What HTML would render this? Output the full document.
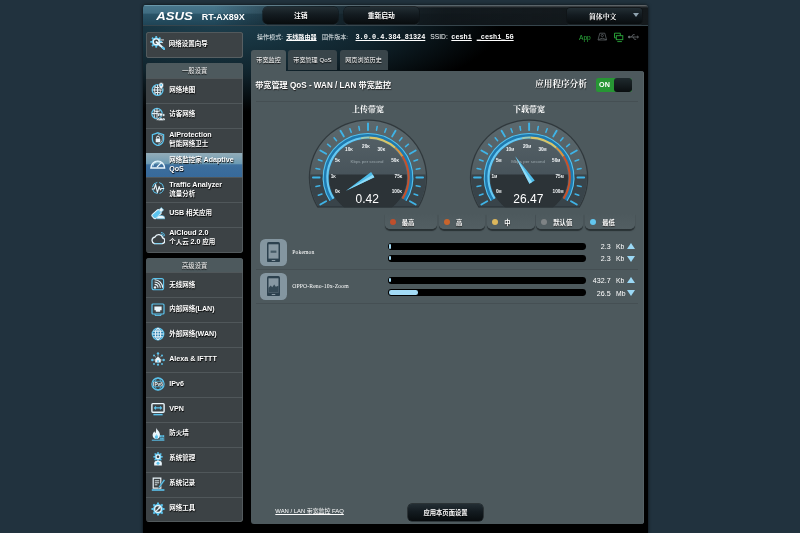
<!DOCTYPE html><html lang="zh-CN"><head><meta charset="utf-8"><title>ASUS Wireless Router RT-AX89X - 带宽监控</title><style>
html,body{margin:0;padding:0}
body{width:800px;height:533px;overflow:hidden;position:relative;will-change:transform;background:#21323d;font-family:'Liberation Sans','Noto Sans CJK SC',sans-serif;color:#fff}
.abs{position:absolute}
#bgL{left:0;top:0;width:144px;height:533px;background:#21323e}
#bgR{left:647px;top:0;width:153px;height:533px;background:#21323e}
#wrap{left:143px;top:4.5px;width:504.8px;height:529px;background:#000;border-radius:3px 3px 0 0;box-shadow:0 0 3.5px rgba(0,0,0,.75)}
#banner{left:143px;top:4.7px;width:504.8px;height:21.6px;border-radius:3px 3px 0 0;
 background:linear-gradient(90deg,rgba(12,16,19,0) 0,rgba(12,16,19,0) 14%,rgba(12,16,19,.35) 24%,rgba(12,16,19,.7) 40%,rgba(14,18,21,.92) 60%,#14191c 100%),linear-gradient(180deg,#4a788d 0,#3f6c81 40%,#2a5468 47%,#1f4456 100%);border-bottom:1px solid #36454c;box-sizing:border-box;overflow:hidden}
#banner:before{content:"";position:absolute;left:0;top:0;width:100%;height:1.4px;background:linear-gradient(90deg,#6a9aad,#55666e 45%,#5d6265)}
#banner:after{content:"";position:absolute;left:45%;top:1.4px;width:55%;height:2px;background:linear-gradient(180deg,rgba(85,90,93,.75),rgba(85,90,93,0))}
.tbtn{top:7px;height:17.2px;border-radius:4.5px;background:linear-gradient(180deg,#232e34 0,#131b20 45%,#080c0e 100%);box-shadow:0 0 0 .5px #0a0e10,0 1px 1px rgba(120,140,150,.25);
 font-weight:bold;font-size:6.8px;line-height:17.2px;text-align:center;color:#fff;text-shadow:0 .5px 0 #000}
.info{top:31.8px;font-size:6.1px;line-height:9px;white-space:nowrap;color:#e8eef0}
.info b{font-weight:bold;color:#fff;text-decoration:underline}
.info .m{font-family:'Liberation Mono','Noto Sans CJK SC',monospace;font-weight:bold;font-size:6.85px;color:#fff;text-decoration:underline}
.sbox{left:146.4px;width:96.5px;background:#3c4245;border-radius:3px;overflow:hidden}
.sbox:after{content:"";position:absolute;left:0;top:0;right:0;bottom:0;border-radius:3px;box-shadow:inset -.8px -.8px 0 #596164;pointer-events:none}
.shead{height:15px;background:#4d595d;text-align:center;font-size:6.3px;line-height:15px;color:#fff;text-shadow:0 .5px 1px #000}
.item{position:relative;height:24.77px;box-sizing:border-box;border-top:.800px solid #50575a;font-weight:bold;font-size:6.5px;color:#fff;text-shadow:.5px .5px 1px #000}
.item .t{position:absolute;left:22.8px;top:-1.7px;height:100%;display:flex;align-items:center;line-height:7.7px;white-space:nowrap}
.item .en{font-size:7.15px}
.item.sel{background:linear-gradient(180deg,#90abb8 0,#7fa3b5 22%,#6c9bb3 42%,#3f719f 47%,#3b6d9c 60%,#386a9a 100%);border-top-color:#90abb8;box-shadow:0 .7px 0 #386a9a}
.tab{top:49.8px;height:21px;border-radius:3px 3px 0 0;font-size:6.1px;line-height:20px;text-align:center;color:#fff;white-space:nowrap;text-shadow:0 .5px 1px #000}
#content{left:251.3px;top:70.7px;width:392.4px;height:453.5px;background:#4d595d;border-radius:0 3px 3px 3px;box-shadow:inset -.8px 0 0 #59656a}
.hr{height:1px;background:#566266;border-top:.6px solid #454f53;box-sizing:border-box}
.leg{top:214px;height:14.6px;border-radius:0 0 5px 5px;background:linear-gradient(180deg,rgba(77,89,93,0) 0,#505c60 50%,#525e62 100%);box-shadow:0 1.4px 1px #293134;font-size:6.3px;font-weight:bold;line-height:17.6px;color:#fff;text-shadow:0 .5px 1px #222}
.leg i{position:absolute;left:5px;top:5.2px;width:6.2px;height:6.2px;border-radius:50%}
.leg span{position:absolute;left:17px;top:0}
.bar{left:387.5px;width:198.5px;height:6.8px;border-radius:3.4px;background:#000}
.bar i{position:absolute;left:1.3px;top:1.2px;height:4.4px;border-radius:2.2px;background:#a3dbf6}
.val{font-size:7.1px;line-height:8px;color:#fff;white-space:nowrap}
.tri{width:0;height:0;border-left:4.2px solid transparent;border-right:4.2px solid transparent}
.dev{left:260.2px;width:27.3px;height:27.3px;border-radius:5.5px;background:#8496a0}
.dname{left:292.2px;font-family:'Liberation Serif','Noto Serif CJK SC',serif;font-size:5.7px;line-height:8px;color:#fff;white-space:nowrap;letter-spacing:.12px}
</style></head><body><div class="abs" id="bgL"></div><div class="abs" id="bgR"></div><div class="abs" id="wrap"></div><div class="abs" style="left:143px;top:26px;width:420px;height:100px;background:radial-gradient(ellipse 290px 92px at 70px -6px,#1e3f4e 0,#17333f 30%,#10232c 60%,rgba(0,0,0,0) 100%)"></div><div class="abs" id="banner"></div><svg class="abs" style="left:156px;top:10px" width="92" height="12" viewBox="0 0 92 12"><text x="0.300" y="9.900" font-family="'Liberation Sans','Noto Sans CJK SC',sans-serif" font-size="10.200" font-weight="bold" font-style="italic" fill="#fff" textLength="36.500" lengthAdjust="spacingAndGlyphs">ASUS</text><text x="45.700" y="9.500" font-family="'Liberation Sans','Noto Sans CJK SC',sans-serif" font-size="9.600" font-weight="bold" fill="#fff" textLength="43" lengthAdjust="spacingAndGlyphs">RT-AX89X</text></svg><div class="abs tbtn" style="left:263.4px;width:74.8px">注销</div><div class="abs tbtn" style="left:343.7px;width:75.1px">重新启动</div><div class="abs tbtn" style="left:567.3px;width:74.8px;top:7.5px;height:16px;line-height:16px;font-family:'Liberation Serif','Noto Serif CJK SC',serif;font-size:6.9px;line-height:17.2px;border-radius:3px;box-sizing:border-box;padding-right:4px">简体中文<div class="abs tri" style="right:3.2px;top:5.2px;border-top:4px solid #8fa2ae;border-left-width:3px;border-right-width:3px"></div></div><div class="abs info" style="left:257px">操作模式:</div><div class="abs info" style="left:286.2px"><b>无线路由器</b></div><div class="abs info" style="left:322px">固件版本:</div><div class="abs info" style="left:355.5px"><span class="m">3.0.0.4.384_81324</span></div><div class="abs info" style="left:430.3px;font-size:6.7px;color:#f0f4f5">SSID:</div><div class="abs info" style="left:451.3px"><span class="m">ceshi</span></div><div class="abs info" style="left:476.7px"><span class="m">_ceshi_5G</span></div><div class="abs" style="left:579px;top:33.5px;font-size:6.6px;line-height:8px;color:#2cb03d">App</div><svg class="abs" style="left:596px;top:31px" width="46" height="12" viewBox="0 0 46 12"><g fill="none" stroke="#5b6063" stroke-width=".8"><path d="M3.800 2.200h5l1.800 6.800h-8.600z"/><circle cx="6.300" cy="4.500" r="1.100"/><path d="M2.600 8.600q3.700-2.800 7.400 0"/></g><g fill="none" stroke="#2cab3c" stroke-width=".9"><path d="M24.300 4.700v-2.500h-5.800v4.700h1.700"/><rect x="20.300" y="4.700" width="6.500" height="4"/><path d="M21.300 10.600h4.600"/></g><g fill="none" stroke="#6a6f72" stroke-width=".8"><path d="M32.800 6h9.400M41 4.800l1.600 1.200-1.600 1.200M35.500 6l1.400-2.300h1.800M37 6l1.400 2.300h1.800"/><circle cx="33.200" cy="6" r=".9" fill="#6a6f72"/></g></svg><div class="abs sbox" style="top:32px;height:25.8px;box-shadow:inset 0 0 0 .8px #596164"><div class="item" style="border:0;height:25.8px"><div class="t" style="left:22.4px;top:-.7px"><div>网络设置向导</div></div></div></div><svg style="position:absolute;left:150.3px;top:35px" width="15" height="15" viewBox="0 0 14 14"><path d="M9.80 5.52L11.35 5.63L11.35 7.17L9.80 7.28L9.25 8.61L10.27 9.78L9.18 10.87L8.01 9.85L6.68 10.40L6.57 11.95L5.03 11.95L4.92 10.40L3.59 9.85L2.42 10.87L1.33 9.78L2.35 8.61L1.80 7.28L0.25 7.17L0.25 5.63L1.80 5.52L2.35 4.19L1.33 3.02L2.42 1.93L3.59 2.95L4.92 2.40L5.03 0.85L6.57 0.85L6.68 2.40L8.01 2.95L9.18 1.93L10.27 3.02L9.25 4.19ZM5.80 6.40A0 0 0 1 0 5.80 6.40A0 0 0 1 0 5.80 6.40Z" fill="#5cc4ee" fill-rule="evenodd"/><circle cx="5.800" cy="6.400" r="3.300" fill="#eaf6fc"/><circle cx="5.800" cy="6.400" r="2.100" fill="#3b4143"/><path d="M6 6.600L12.800 12.600" stroke="#eaf6fc" stroke-width="1.800" stroke-linecap="round"/><path d="M11.900 11.800l1.500 1.300" stroke="#5cc4ee" stroke-width="2" stroke-linecap="round"/><path d="M8 4.600h5M8.600 6.600l3.600 .6" stroke="#eaf6fc" stroke-width=".8"/></svg><div class="abs sbox" style="top:63.3px;height:189.4px"><div class="shead">一般设置</div><div class="item"><div class="t"><div>网络地图</div></div></div><div class="item"><div class="t"><div>访客网络</div></div></div><div class="item"><div class="t"><div><span class="en">AiProtection</span><br>智能网络卫士</div></div></div><div class="item sel"><div class="t" style="top:-.5px"><div>网络监控家 <span class="en">Adaptive</span><br><span class="en">QoS</span></div></div></div><div class="item"><div class="t" style="top:-.7px"><div><span class="en">Traffic Analyzer</span><br>流量分析</div></div></div><div class="item"><div class="t"><div><span class="en">USB</span> 相关应用</div></div></div><div class="item"><div class="t"><div><span class="en">AiCloud 2.0</span><br>个人云 <span class="en">2.0</span> 应用</div></div></div></div><svg style="position:absolute;left:150.6px;top:82.3px" width="14" height="14" viewBox="0 0 14 14"><circle cx="6.600" cy="8" r="5.400" fill="none" stroke="#5cc4ee" stroke-width="1.300"/><path d="M1.600 8h10M6.600 3v10M3.400 5q3.200 1.600 6.400 0M3.400 11q3.200-1.600 6.400 0" stroke="#eaf6fc" stroke-width="1" fill="none"/><path d="M4.300 3.600q-1.800 4.400 0 8.800M8.900 6q1 3.200 0 6.400" stroke="#eaf6fc" stroke-width=".8" fill="none"/><path d="M10.200 .6a2.500 2.500 0 0 1 2.500 2.500c0 1.800-2.500 4.600-2.500 4.600s-2.500-2.800-2.500-4.600A2.500 2.500 0 0 1 10.200 .6z" fill="#eaf6fc" stroke="#3a4042" stroke-width=".6"/><circle cx="10.200" cy="3.100" r="1" fill="#5cc4ee"/></svg><svg style="position:absolute;left:150.6px;top:107.07px" width="14" height="14" viewBox="0 0 14 14"><circle cx="6" cy="6.600" r="5.200" fill="none" stroke="#5cc4ee" stroke-width="1.300"/><path d="M1 6.600h10M6 1.600v10M2.800 3.800q3.200 1.500 6.400 0" stroke="#eaf6fc" stroke-width="1" fill="none"/><path d="M3.800 2.400q-1.700 4.200 0 8.400" stroke="#eaf6fc" stroke-width=".8" fill="none"/><g fill="#eaf6fc" stroke="#3a4042" stroke-width=".4"><circle cx="7.400" cy="8" r="1.300"/><circle cx="12.600" cy="8" r="1.300"/><path d="M5.200 13.300q2.200-4.800 4.400 0zM10.400 13.300q2.200-4.800 4.400 0z"/><circle cx="10" cy="7.600" r="1.600"/><path d="M7.200 13.600q2.800-5.800 5.600 0z"/></g></svg><svg style="position:absolute;left:150.6px;top:131.84px" width="14" height="14" viewBox="0 0 14 14"><path d="M7 .8l5.600 1.900v4.500c0 3.200-2.600 5.500-5.600 6.500-3-1-5.600-3.300-5.600-6.500V2.700z" fill="none" stroke="#5cc4ee" stroke-width="1.300"/><path d="M7 2.200l4.300 1.500v3.500c0 2.400-2 4.200-4.300 5" fill="none" stroke="#eaf6fc" stroke-width=".6"/><rect x="4.700" y="6.500" width="4.600" height="3.800" rx=".6" fill="#eaf6fc"/><path d="M5.600 6.500V5.500a1.400 1.400 0 0 1 2.800 0v1" stroke="#eaf6fc" stroke-width="1" fill="none"/></svg><svg style="position:absolute;left:150.1px;top:155.21px" width="15.5" height="15.5" viewBox="0 0 14 14"><path d="M.8 11.800a6.200 6.200 0 1 1 12.400 0z" fill="none" stroke="#eaf6fc" stroke-width="1.300"/><path d="M2.600 10.400a4.400 4.400 0 0 1 8-2.600" fill="none" stroke="#bfe6f7" stroke-width=".8"/><path d="M6.600 10.600l3.200-3.200" stroke="#eaf6fc" stroke-width="1.100" stroke-linecap="round"/></svg><svg style="position:absolute;left:150.6px;top:181.38px" width="14" height="14" viewBox="0 0 14 14"><circle cx="7" cy="7" r="5.600" fill="none" stroke="#5cc4ee" stroke-width="1" stroke-dasharray="7 2"/><path d="M.8 8h2.400l1.400-4.500 1.800 8 1.800-6 1.200 3.500 1-1.500h2.800" fill="none" stroke="#eaf6fc" stroke-width="1.100" stroke-linejoin="round"/></svg><svg style="position:absolute;left:150.6px;top:206.14999999999998px" width="14" height="14" viewBox="0 0 14 14"><g transform="rotate(-42 7 7)"><rect x=".4" y="4.300" width="9.400" height="5.200" rx="1.500" fill="#5cc4ee" stroke="#eaf6fc" stroke-width="1"/><rect x="9.800" y="5.200" width="3.400" height="3.400" fill="#eaf6fc" stroke="#5cc4ee" stroke-width=".5"/></g><path d="M5.600 12.800a4.200 3.400 0 0 1 8.400 0z" fill="#eaf6fc" stroke="#5cc4ee" stroke-width=".6"/></svg><svg style="position:absolute;left:150.6px;top:230.92000000000002px" width="14" height="14" viewBox="0 0 14 14"><path d="M3.400 12.600h7.800a2.900 2.900 0 0 0 .4-5.700 4 4 0 0 0-7.600-.9A3.400 3.400 0 0 0 3.400 12.600z" fill="none" stroke="#eaf6fc" stroke-width="1.300"/><path d="M3.400 12.600h7.800" stroke="#5cc4ee" stroke-width=".8"/><path d="M9.700 3a3 3 0 0 1 3 2.600M10 1.300a4.600 4.600 0 0 1 4 3.800" stroke="#5cc4ee" stroke-width=".9" fill="none"/></svg><div class="abs sbox" style="top:258px;height:263.8px"><div class="shead" style="height:14.3px;line-height:15.3px">高级设置</div><div class="item" style="height:24.95px"><div class="t" style="top:-0.4px"><div>无线网络</div></div></div><div class="item" style="height:24.95px"><div class="t" style="top:-0.4px"><div>内部网络<span class="en">(LAN)</span></div></div></div><div class="item" style="height:24.95px"><div class="t" style="top:-0.4px"><div>外部网络<span class="en">(WAN)</span></div></div></div><div class="item" style="height:24.95px"><div class="t" style="top:-0.4px"><div><span class="en">Alexa &amp; IFTTT</span></div></div></div><div class="item" style="height:24.95px"><div class="t" style="top:-0.4px"><div><span class="en">IPv6</span></div></div></div><div class="item" style="height:24.95px"><div class="t" style="top:-0.4px"><div><span class="en">VPN</span></div></div></div><div class="item" style="height:24.95px"><div class="t" style="top:-2.0px"><div>防火墙</div></div></div><div class="item" style="height:24.95px"><div class="t" style="top:-2.0px"><div>系统管理</div></div></div><div class="item" style="height:24.95px"><div class="t" style="top:-2.0px"><div>系统记录</div></div></div><div class="item" style="height:24.95px"><div class="t" style="top:-2.0px"><div>网络工具</div></div></div></div><svg style="position:absolute;left:150.6px;top:277.1px" width="14" height="14" viewBox="0 0 14 14"><rect x="1" y="1.600" width="11.600" height="11.200" rx="2" fill="none" stroke="#5cc4ee" stroke-width="1.100"/><circle cx="4" cy="10.400" r="1.200" fill="#eaf6fc"/><path d="M3.600 7.400a3.400 3.400 0 0 1 3.400 3.400M3.600 5a5.800 5.800 0 0 1 5.800 5.800M3.600 2.800a8 8 0 0 1 8 8" stroke="#eaf6fc" stroke-width="1.100" fill="none"/></svg><svg style="position:absolute;left:150.6px;top:302.05px" width="14" height="14" viewBox="0 0 14 14"><rect x="1" y="2" width="12" height="10" rx="1" fill="none" stroke="#5cc4ee" stroke-width="1.200"/><path d="M3.400 4.600h7.200v3.600h-1.400v1.600h-4.400v-1.600h-1.400z" fill="#eaf6fc"/><path d="M4 12v1.400h6V12" stroke="#5cc4ee" stroke-width="1" fill="none"/></svg><svg style="position:absolute;left:150.6px;top:327.0px" width="14" height="14" viewBox="0 0 14 14"><circle cx="7" cy="7" r="5.800" fill="#2b7fae" stroke="#5cc4ee" stroke-width="1.200"/><ellipse cx="7" cy="7" rx="2.700" ry="5.800" fill="none" stroke="#eaf6fc" stroke-width="1"/><path d="M1.200 7h11.600M2.200 4.200h9.600M2.200 9.800h9.600M7 1.200v11.600" stroke="#eaf6fc" stroke-width="1"/></svg><svg style="position:absolute;left:150.6px;top:351.95px" width="14" height="14" viewBox="0 0 14 14"><path d="M4.200 7.200L7 4.600l2.800 2.600v3.200H4.200z" fill="#eaf6fc"/><rect x="6.200" y="8.200" width="1.600" height="2.200" fill="#5cc4ee"/><g fill="#5cc4ee"><circle cx="7" cy="1.500" r="1.200"/><circle cx="7" cy="12.700" r="1.100"/><circle cx="1.300" cy="8" r="1.200"/><circle cx="12.700" cy="8" r="1.200"/><circle cx="3" cy="3.400" r="1"/><circle cx="11" cy="3.400" r="1"/><circle cx="3" cy="12" r=".9"/><circle cx="11" cy="12" r=".9"/></g><path d="M7 2.600v2M2.400 8h1.800M9.800 8h1.800M3.700 4.100l1.300 1.300M10.300 4.100L9 5.400" stroke="#eaf6fc" stroke-width=".5"/></svg><svg style="position:absolute;left:150.6px;top:376.90000000000003px" width="14" height="14" viewBox="0 0 14 14"><circle cx="7" cy="7" r="6" fill="none" stroke="#5cc4ee" stroke-width="1.400"/><ellipse cx="7" cy="7" rx="3" ry="6" fill="none" stroke="#5cc4ee" stroke-width=".7"/><path d="M1.500 4.300h11M1.500 9.700h11" stroke="#5cc4ee" stroke-width=".7"/><rect x="1.800" y="5" width="10.400" height="4" fill="#3b4143"/><text x="7" y="8.700" font-family="Liberation Sans,sans-serif" font-size="4.800" font-weight="bold" fill="#eaf6fc" text-anchor="middle">IPv6</text></svg><svg style="position:absolute;left:150.6px;top:401.85px" width="14" height="14" viewBox="0 0 14 14"><rect x=".9" y="1.600" width="12.200" height="8.600" rx=".9" fill="none" stroke="#eaf6fc" stroke-width="1.400"/><path d="M3.600 5.900h6.800M4.900 4.500L3.500 5.900l1.400 1.400M9.100 4.500l1.400 1.400-1.400 1.400" stroke="#5cc4ee" stroke-width="1.100" fill="none"/><path d="M2.400 12.600h9.200" stroke="#5cc4ee" stroke-width="1.500"/></svg><svg style="position:absolute;left:150.6px;top:426.8px" width="14" height="14" viewBox="0 0 14 14"><path d="M5.400 .8c.6 2.600 3.600 3.800 3.600 7.200 0 2.400-1.500 4-3.600 4S1.600 10.500 1.600 8.200c0-1.700 1-2.800 1.700-4 .4 1 .8 1.500 1.300 1.700.4-1.500.6-3.200.8-5.100z" fill="#eaf6fc"/><path d="M5.400 6.800c.3 1.200 1.600 1.800 1.600 3.300 0 1.100-.7 1.900-1.600 1.900s-1.600-.8-1.600-1.900c0-.8.500-1.300.8-1.900.2.500.4.700.6.800.1-.7.200-1.400.2-2.200z" fill="#5cc4ee"/><rect x="8.800" y="8.200" width="4.400" height="4.400" fill="#5cc4ee"/><path d="M8.800 10.400h4.400M11 8.200v2.200M10 10.400v2.200M12.200 10.400v2.200" stroke="#3b4143" stroke-width=".5"/><path d="M.8 13.200h12.600" stroke="#5cc4ee" stroke-width="1"/></svg><svg style="position:absolute;left:150.6px;top:451.75000000000006px" width="14" height="14" viewBox="0 0 14 14"><path d="M10.42 4.05L11.75 4.14L11.75 5.46L10.42 5.55L9.95 6.69L10.83 7.69L9.89 8.63L8.89 7.75L7.75 8.22L7.66 9.55L6.34 9.55L6.25 8.22L5.11 7.75L4.11 8.63L3.17 7.69L4.05 6.69L3.58 5.55L2.25 5.46L2.25 4.14L3.58 4.05L4.05 2.91L3.17 1.91L4.11 0.97L5.11 1.85L6.25 1.38L6.34 0.05L7.66 0.05L7.75 1.38L8.89 1.85L9.89 0.97L10.83 1.91L9.95 2.91ZM7.00 4.80A0 0 0 1 0 7.00 4.80A0 0 0 1 0 7.00 4.80Z" fill="#5cc4ee" fill-rule="evenodd"/><circle cx="7" cy="4.800" r="2.500" fill="#eaf6fc"/><circle cx="7" cy="4.800" r="1.300" fill="#3b4143"/><path d="M3.200 13.600v-2.400c0-1.600 1.400-2.600 3.800-2.600s3.800 1 3.800 2.600v2.400z" fill="#eaf6fc"/><circle cx="7" cy="11.300" r="1.500" fill="#5cc4ee"/></svg><svg style="position:absolute;left:150.6px;top:476.7px" width="14" height="14" viewBox="0 0 14 14"><path d="M2.200 1.200h7.600v10h-7.600z" fill="#3b4143" stroke="#eaf6fc" stroke-width="1.200"/><path d="M3.800 3.800h4.400M3.800 5.800h4.400M3.800 7.800h2.600" stroke="#eaf6fc" stroke-width=".9"/><path d="M12.800 2.200L7.800 9.200l-.5 2.100 1.900-1 5-7z" fill="#5cc4ee" stroke="#3b4143" stroke-width=".4"/><path d="M.8 13h12.600" stroke="#5cc4ee" stroke-width="1.600"/></svg><svg style="position:absolute;left:150.6px;top:501.65000000000003px" width="14" height="14" viewBox="0 0 14 14"><path d="M11.88 5.93L13.54 6.09L13.54 7.91L11.88 8.07L11.21 9.70L12.27 10.98L10.98 12.27L9.70 11.21L8.07 11.88L7.91 13.54L6.09 13.54L5.93 11.88L4.30 11.21L3.02 12.27L1.73 10.98L2.79 9.70L2.12 8.07L0.46 7.91L0.46 6.09L2.12 5.93L2.79 4.30L1.73 3.02L3.02 1.73L4.30 2.79L5.93 2.12L6.09 0.46L7.91 0.46L8.07 2.12L9.70 2.79L10.98 1.73L12.27 3.02L11.21 4.30ZM7.00 7.00A0 0 0 1 0 7.00 7.00A0 0 0 1 0 7.00 7.00Z" fill="#5cc4ee" fill-rule="evenodd"/><circle cx="7" cy="7" r="3.900" fill="#eaf6fc"/><circle cx="7" cy="7" r="2.700" fill="#3b4143"/><path d="M5.600 8.600l2.600-2.600" stroke="#eaf6fc" stroke-width="1.300" stroke-linecap="round"/><circle cx="8.500" cy="5.600" r="1" fill="#eaf6fc"/></svg><div class="abs tab" style="left:251.3px;width:34.5px;background:#4d595d">带宽监控</div><div class="abs tab" style="left:287.7px;width:49.6px;background:#39454a;height:20.2px">带宽管理 QoS</div><div class="abs tab" style="left:339.5px;width:48px;background:#39454a;height:20.2px">网页浏览历史</div><div class="abs" id="content"></div><div class="abs" style="left:255.2px;top:80px;font-size:8.15px;line-height:11px;font-weight:bold;color:#fff;white-space:nowrap;text-shadow:.5px .5px 1px #1a1a1a">带宽管理 QoS - WAN / LAN 带宽监控</div><div class="abs" style="left:480px;width:106.8px;text-align:right;top:79px;font-family:'Liberation Serif','Noto Serif CJK SC',serif;font-size:8.6px;line-height:11px;font-weight:bold;color:#fff;white-space:nowrap;text-shadow:.5px .5px 1px #1a1a1a">应用程序分析</div><div class="abs" style="left:595.8px;top:77.5px;width:36px;height:14.5px;border-radius:2.5px;background:#279634;overflow:hidden"><div class="abs" style="left:3.3px;top:0;font-size:7.2px;line-height:14.5px;font-weight:bold;color:#fff">ON</div><div class="abs" style="left:18.5px;top:0;width:17.5px;height:14.5px;border-radius:3px;background:linear-gradient(180deg,#1f2a2e,#0a0e10)"></div></div><div class="abs hr" style="left:256px;top:101.3px;width:382px"></div><svg class="abs" style="left:251px;top:100px" width="393" height="112" viewBox="251 100 393 112"><defs><clipPath id="c1"><rect x="308" y="117.5" width="120" height="90.3"/></clipPath><linearGradient id="bz1" x1="0" y1="0" x2="0" y2="1"><stop offset="0" stop-color="#5b686d"/><stop offset="1" stop-color="#485459"/></linearGradient><linearGradient id="fc1" x1="0" y1="0" x2="0" y2="1"><stop offset="0" stop-color="#535f65"/><stop offset=".5" stop-color="#47535a"/><stop offset="1" stop-color="#47535a"/></linearGradient></defs><g transform="translate(368 177.5) scale(1.012 0.993) translate(-368 -177.5)"><g clip-path="url(#c1)"><circle cx="368" cy="177.5" r="58.5" fill="#30383c"/><circle cx="368" cy="177.5" r="57.2" fill="url(#bz1)"/><clipPath id="k1"><circle cx="368" cy="177.5" r="57.2"/></clipPath><rect x="308" y="174.5" width="120" height="40" fill="#39444a" clip-path="url(#k1)"/><circle cx="368" cy="177.5" r="38.5" fill="url(#fc1)"/><clipPath id="f1"><circle cx="368" cy="177.5" r="38.5"/></clipPath><rect x="308" y="174.5" width="120" height="40" fill="#2c3337" clip-path="url(#f1)"/><line x1="326.60" y1="201.40" x2="320.89" y2="204.70" stroke="#3fb3e6" stroke-width="1.9" stroke-linecap="round"/><line x1="322.52" y1="194.05" x2="318.95" y2="195.35" stroke="#3fb3e6" stroke-width="1.5" stroke-linecap="round"/><line x1="320.34" y1="185.90" x2="316.59" y2="186.56" stroke="#3fb3e6" stroke-width="1.5" stroke-linecap="round"/><line x1="320.20" y1="177.50" x2="313.60" y2="177.50" stroke="#3fb3e6" stroke-width="1.9" stroke-linecap="round"/><line x1="320.34" y1="169.10" x2="316.59" y2="168.44" stroke="#3fb3e6" stroke-width="1.5" stroke-linecap="round"/><line x1="322.52" y1="160.95" x2="318.95" y2="159.65" stroke="#3fb3e6" stroke-width="1.5" stroke-linecap="round"/><line x1="326.60" y1="153.60" x2="320.89" y2="150.30" stroke="#3fb3e6" stroke-width="1.9" stroke-linecap="round"/><line x1="330.92" y1="146.39" x2="328.01" y2="143.95" stroke="#3fb3e6" stroke-width="1.5" stroke-linecap="round"/><line x1="336.89" y1="140.42" x2="334.45" y2="137.51" stroke="#3fb3e6" stroke-width="1.5" stroke-linecap="round"/><line x1="344.10" y1="136.10" x2="340.80" y2="130.39" stroke="#3fb3e6" stroke-width="1.9" stroke-linecap="round"/><line x1="351.45" y1="132.02" x2="350.15" y2="128.45" stroke="#3fb3e6" stroke-width="1.5" stroke-linecap="round"/><line x1="359.60" y1="129.84" x2="358.94" y2="126.09" stroke="#3fb3e6" stroke-width="1.5" stroke-linecap="round"/><line x1="368.00" y1="129.70" x2="368.00" y2="123.10" stroke="#3fb3e6" stroke-width="1.9" stroke-linecap="round"/><line x1="376.40" y1="129.84" x2="377.06" y2="126.09" stroke="#3fb3e6" stroke-width="1.5" stroke-linecap="round"/><line x1="384.55" y1="132.02" x2="385.85" y2="128.45" stroke="#3fb3e6" stroke-width="1.5" stroke-linecap="round"/><line x1="391.90" y1="136.10" x2="395.20" y2="130.39" stroke="#3fb3e6" stroke-width="1.9" stroke-linecap="round"/><line x1="399.11" y1="140.42" x2="401.55" y2="137.51" stroke="#3fb3e6" stroke-width="1.5" stroke-linecap="round"/><line x1="405.08" y1="146.39" x2="407.99" y2="143.95" stroke="#3fb3e6" stroke-width="1.5" stroke-linecap="round"/><line x1="409.40" y1="153.60" x2="415.11" y2="150.30" stroke="#3fb3e6" stroke-width="1.9" stroke-linecap="round"/><line x1="413.48" y1="160.95" x2="417.05" y2="159.65" stroke="#3fb3e6" stroke-width="1.5" stroke-linecap="round"/><line x1="415.66" y1="169.10" x2="419.41" y2="168.44" stroke="#3fb3e6" stroke-width="1.5" stroke-linecap="round"/><line x1="415.80" y1="177.50" x2="422.40" y2="177.50" stroke="#3fb3e6" stroke-width="1.9" stroke-linecap="round"/><line x1="415.66" y1="185.90" x2="419.41" y2="186.56" stroke="#3fb3e6" stroke-width="1.5" stroke-linecap="round"/><line x1="413.48" y1="194.05" x2="417.05" y2="195.35" stroke="#3fb3e6" stroke-width="1.5" stroke-linecap="round"/><line x1="409.40" y1="201.40" x2="415.11" y2="204.70" stroke="#3fb3e6" stroke-width="1.9" stroke-linecap="round"/><path d="M332.55 199.65A41.8 41.8 0 1 1 403.45 199.65" fill="none" stroke="#1f79ae" stroke-width="5.6"/><path d="M330.43 200.98A44.3 44.3 0 1 1 405.57 200.98" fill="none" stroke="#57c1ec" stroke-width="1.1"/><path d="M333.91 198.80A40.2 40.2 0 0 1 361.02 137.91" fill="none" stroke="#66c8f2" stroke-width="2.1"/><path d="M361.02 137.91A40.2 40.2 0 0 1 369.40 137.32" fill="none" stroke="#9dc9b4" stroke-width="2.1"/><path d="M369.40 137.32A40.2 40.2 0 0 1 394.90 147.63" fill="none" stroke="#d8c468" stroke-width="2.1"/><path d="M394.90 147.63A40.2 40.2 0 0 1 402.09 156.20" fill="none" stroke="#d9933f" stroke-width="2.1"/><path d="M402.09 156.20A40.2 40.2 0 0 1 402.09 198.80" fill="none" stroke="#c8522a" stroke-width="2.1"/><polygon points="346.26,190.82 374.31,177.27 371.07,171.98" fill="#4fbdea"/><polygon points="346.26,190.82 374.31,177.27 372.69,174.63" fill="#8fdcf8"/><rect x="318" y="206.60000000000002" width="100" height="1.2" fill="#2c3438"/></g></g><text x="337.60" y="193.10" text-anchor="middle" font-family="'Liberation Sans','Noto Sans CJK SC',sans-serif" font-size="4.7" font-weight="bold" fill="#f4f8fa">0<tspan font-size="3.6">K</tspan></text><text x="333.30" y="177.60" text-anchor="middle" font-family="'Liberation Sans','Noto Sans CJK SC',sans-serif" font-size="4.7" font-weight="bold" fill="#f4f8fa">1<tspan font-size="3.6">K</tspan></text><text x="337.60" y="162.40" text-anchor="middle" font-family="'Liberation Sans','Noto Sans CJK SC',sans-serif" font-size="4.7" font-weight="bold" fill="#f4f8fa">5<tspan font-size="3.6">K</tspan></text><text x="349.00" y="150.60" text-anchor="middle" font-family="'Liberation Sans','Noto Sans CJK SC',sans-serif" font-size="4.7" font-weight="bold" fill="#f4f8fa">10<tspan font-size="3.6">K</tspan></text><text x="366.00" y="147.60" text-anchor="middle" font-family="'Liberation Sans','Noto Sans CJK SC',sans-serif" font-size="4.7" font-weight="bold" fill="#f4f8fa">20<tspan font-size="3.6">K</tspan></text><text x="381.40" y="150.60" text-anchor="middle" font-family="'Liberation Sans','Noto Sans CJK SC',sans-serif" font-size="4.7" font-weight="bold" fill="#f4f8fa">30<tspan font-size="3.6">K</tspan></text><text x="395.10" y="162.40" text-anchor="middle" font-family="'Liberation Sans','Noto Sans CJK SC',sans-serif" font-size="4.7" font-weight="bold" fill="#f4f8fa">50<tspan font-size="3.6">K</tspan></text><text x="398.50" y="178.10" text-anchor="middle" font-family="'Liberation Sans','Noto Sans CJK SC',sans-serif" font-size="4.7" font-weight="bold" fill="#f4f8fa">75<tspan font-size="3.6">K</tspan></text><text x="396.90" y="193.10" text-anchor="middle" font-family="'Liberation Sans','Noto Sans CJK SC',sans-serif" font-size="4.7" font-weight="bold" fill="#f4f8fa">100<tspan font-size="3.6">K</tspan></text><text x="367" y="162.8" text-anchor="middle" font-family="'Liberation Sans','Noto Sans CJK SC',sans-serif" font-size="4.4" fill="#9aa7ac">Kbps per second</text><text x="367.2" y="202.9" text-anchor="middle" font-family="'Liberation Sans','Noto Sans CJK SC',sans-serif" font-size="12" fill="#fff">0.42</text><text x="368" y="112.3" text-anchor="middle" font-family="'Liberation Serif','Noto Serif CJK SC',serif" font-size="8" font-weight="bold" fill="#fff">上传带宽</text><defs><clipPath id="c2"><rect x="469.1" y="117.5" width="120" height="90.3"/></clipPath><linearGradient id="bz2" x1="0" y1="0" x2="0" y2="1"><stop offset="0" stop-color="#5b686d"/><stop offset="1" stop-color="#485459"/></linearGradient><linearGradient id="fc2" x1="0" y1="0" x2="0" y2="1"><stop offset="0" stop-color="#535f65"/><stop offset=".5" stop-color="#47535a"/><stop offset="1" stop-color="#47535a"/></linearGradient></defs><g transform="translate(529.1 177.5) scale(1.012 0.993) translate(-529.1 -177.5)"><g clip-path="url(#c2)"><circle cx="529.1" cy="177.5" r="58.5" fill="#30383c"/><circle cx="529.1" cy="177.5" r="57.2" fill="url(#bz2)"/><clipPath id="k2"><circle cx="529.1" cy="177.5" r="57.2"/></clipPath><rect x="469.1" y="174.5" width="120" height="40" fill="#39444a" clip-path="url(#k2)"/><circle cx="529.1" cy="177.5" r="38.5" fill="url(#fc2)"/><clipPath id="f2"><circle cx="529.1" cy="177.5" r="38.5"/></clipPath><rect x="469.1" y="174.5" width="120" height="40" fill="#2c3337" clip-path="url(#f2)"/><line x1="487.70" y1="201.40" x2="481.99" y2="204.70" stroke="#3fb3e6" stroke-width="1.9" stroke-linecap="round"/><line x1="483.62" y1="194.05" x2="480.05" y2="195.35" stroke="#3fb3e6" stroke-width="1.5" stroke-linecap="round"/><line x1="481.44" y1="185.90" x2="477.69" y2="186.56" stroke="#3fb3e6" stroke-width="1.5" stroke-linecap="round"/><line x1="481.30" y1="177.50" x2="474.70" y2="177.50" stroke="#3fb3e6" stroke-width="1.9" stroke-linecap="round"/><line x1="481.44" y1="169.10" x2="477.69" y2="168.44" stroke="#3fb3e6" stroke-width="1.5" stroke-linecap="round"/><line x1="483.62" y1="160.95" x2="480.05" y2="159.65" stroke="#3fb3e6" stroke-width="1.5" stroke-linecap="round"/><line x1="487.70" y1="153.60" x2="481.99" y2="150.30" stroke="#3fb3e6" stroke-width="1.9" stroke-linecap="round"/><line x1="492.02" y1="146.39" x2="489.11" y2="143.95" stroke="#3fb3e6" stroke-width="1.5" stroke-linecap="round"/><line x1="497.99" y1="140.42" x2="495.55" y2="137.51" stroke="#3fb3e6" stroke-width="1.5" stroke-linecap="round"/><line x1="505.20" y1="136.10" x2="501.90" y2="130.39" stroke="#3fb3e6" stroke-width="1.9" stroke-linecap="round"/><line x1="512.55" y1="132.02" x2="511.25" y2="128.45" stroke="#3fb3e6" stroke-width="1.5" stroke-linecap="round"/><line x1="520.70" y1="129.84" x2="520.04" y2="126.09" stroke="#3fb3e6" stroke-width="1.5" stroke-linecap="round"/><line x1="529.10" y1="129.70" x2="529.10" y2="123.10" stroke="#3fb3e6" stroke-width="1.9" stroke-linecap="round"/><line x1="537.50" y1="129.84" x2="538.16" y2="126.09" stroke="#3fb3e6" stroke-width="1.5" stroke-linecap="round"/><line x1="545.65" y1="132.02" x2="546.95" y2="128.45" stroke="#3fb3e6" stroke-width="1.5" stroke-linecap="round"/><line x1="553.00" y1="136.10" x2="556.30" y2="130.39" stroke="#3fb3e6" stroke-width="1.9" stroke-linecap="round"/><line x1="560.21" y1="140.42" x2="562.65" y2="137.51" stroke="#3fb3e6" stroke-width="1.5" stroke-linecap="round"/><line x1="566.18" y1="146.39" x2="569.09" y2="143.95" stroke="#3fb3e6" stroke-width="1.5" stroke-linecap="round"/><line x1="570.50" y1="153.60" x2="576.21" y2="150.30" stroke="#3fb3e6" stroke-width="1.9" stroke-linecap="round"/><line x1="574.58" y1="160.95" x2="578.15" y2="159.65" stroke="#3fb3e6" stroke-width="1.5" stroke-linecap="round"/><line x1="576.76" y1="169.10" x2="580.51" y2="168.44" stroke="#3fb3e6" stroke-width="1.5" stroke-linecap="round"/><line x1="576.90" y1="177.50" x2="583.50" y2="177.50" stroke="#3fb3e6" stroke-width="1.9" stroke-linecap="round"/><line x1="576.76" y1="185.90" x2="580.51" y2="186.56" stroke="#3fb3e6" stroke-width="1.5" stroke-linecap="round"/><line x1="574.58" y1="194.05" x2="578.15" y2="195.35" stroke="#3fb3e6" stroke-width="1.5" stroke-linecap="round"/><line x1="570.50" y1="201.40" x2="576.21" y2="204.70" stroke="#3fb3e6" stroke-width="1.9" stroke-linecap="round"/><path d="M493.65 199.65A41.8 41.8 0 1 1 564.55 199.65" fill="none" stroke="#1f79ae" stroke-width="5.6"/><path d="M491.53 200.98A44.3 44.3 0 1 1 566.67 200.98" fill="none" stroke="#57c1ec" stroke-width="1.1"/><path d="M495.01 198.80A40.2 40.2 0 0 1 522.12 137.91" fill="none" stroke="#66c8f2" stroke-width="2.1"/><path d="M522.12 137.91A40.2 40.2 0 0 1 530.50 137.32" fill="none" stroke="#9dc9b4" stroke-width="2.1"/><path d="M530.50 137.32A40.2 40.2 0 0 1 556.00 147.63" fill="none" stroke="#d8c468" stroke-width="2.1"/><path d="M556.00 147.63A40.2 40.2 0 0 1 563.19 156.20" fill="none" stroke="#d9933f" stroke-width="2.1"/><path d="M563.19 156.20A40.2 40.2 0 0 1 563.19 198.80" fill="none" stroke="#c8522a" stroke-width="2.1"/><polygon points="515.40,155.99 529.44,183.80 534.67,180.47" fill="#4fbdea"/><polygon points="515.40,155.99 529.44,183.80 532.06,182.14" fill="#8fdcf8"/><rect x="479.1" y="206.60000000000002" width="100" height="1.2" fill="#2c3438"/></g></g><text x="498.70" y="193.10" text-anchor="middle" font-family="'Liberation Sans','Noto Sans CJK SC',sans-serif" font-size="4.7" font-weight="bold" fill="#f4f8fa">0<tspan font-size="3.6">M</tspan></text><text x="494.40" y="177.60" text-anchor="middle" font-family="'Liberation Sans','Noto Sans CJK SC',sans-serif" font-size="4.7" font-weight="bold" fill="#f4f8fa">1<tspan font-size="3.6">M</tspan></text><text x="498.70" y="162.40" text-anchor="middle" font-family="'Liberation Sans','Noto Sans CJK SC',sans-serif" font-size="4.7" font-weight="bold" fill="#f4f8fa">5<tspan font-size="3.6">M</tspan></text><text x="510.10" y="150.60" text-anchor="middle" font-family="'Liberation Sans','Noto Sans CJK SC',sans-serif" font-size="4.7" font-weight="bold" fill="#f4f8fa">10<tspan font-size="3.6">M</tspan></text><text x="527.10" y="147.60" text-anchor="middle" font-family="'Liberation Sans','Noto Sans CJK SC',sans-serif" font-size="4.7" font-weight="bold" fill="#f4f8fa">20<tspan font-size="3.6">M</tspan></text><text x="542.50" y="150.60" text-anchor="middle" font-family="'Liberation Sans','Noto Sans CJK SC',sans-serif" font-size="4.7" font-weight="bold" fill="#f4f8fa">30<tspan font-size="3.6">M</tspan></text><text x="556.20" y="162.40" text-anchor="middle" font-family="'Liberation Sans','Noto Sans CJK SC',sans-serif" font-size="4.7" font-weight="bold" fill="#f4f8fa">50<tspan font-size="3.6">M</tspan></text><text x="559.60" y="178.10" text-anchor="middle" font-family="'Liberation Sans','Noto Sans CJK SC',sans-serif" font-size="4.7" font-weight="bold" fill="#f4f8fa">75<tspan font-size="3.6">M</tspan></text><text x="558.00" y="193.10" text-anchor="middle" font-family="'Liberation Sans','Noto Sans CJK SC',sans-serif" font-size="4.7" font-weight="bold" fill="#f4f8fa">100<tspan font-size="3.6">M</tspan></text><text x="528.1" y="162.8" text-anchor="middle" font-family="'Liberation Sans','Noto Sans CJK SC',sans-serif" font-size="4.4" fill="#9aa7ac">Mbps per second</text><text x="528.3000000000001" y="202.9" text-anchor="middle" font-family="'Liberation Sans','Noto Sans CJK SC',sans-serif" font-size="12" fill="#fff">26.47</text><text x="529.1" y="112.3" text-anchor="middle" font-family="'Liberation Serif','Noto Serif CJK SC',serif" font-size="8" font-weight="bold" fill="#fff">下载带宽</text></svg><div class="abs leg" style="left:384.8px;width:51.8px"><i style="background:#bf4f2c"></i><span>最高</span></div><div class="abs leg" style="left:439px;width:46.4px"><i style="background:#c8642c"></i><span>高</span></div><div class="abs leg" style="left:487.3px;width:47.3px"><i style="background:#dcb75c"></i><span>中</span></div><div class="abs leg" style="left:536.3px;width:47.2px"><i style="background:#7e8385"></i><span>默认值</span></div><div class="abs leg" style="left:585.2px;width:49.6px"><i style="background:#62c6ef"></i><span>最低</span></div><div class="abs hr" style="left:256px;top:268.8px;width:382px"></div><div class="abs hr" style="left:256px;top:302.8px;width:382px"></div><div class="abs dev" style="top:238.9px"><svg class="abs" style="left:7px;top:3.2px" width="13" height="20.400" viewBox="0 0 13 20.400"><rect x="0" y="0" width="13" height="20.400" rx="1.700" fill="#2c414e"/><rect x="1.500" y="2.300" width="10" height="14.300" fill="#8798a2"/><rect x="4.600" y="17.900" width="3.800" height="1.100" rx=".5" fill="#8b9ba5"/><path d="M3.600 8.600h5.800v2.200h-5.800z" fill="#3a505c" opacity=".85"/></svg></div><div class="abs dev" style="top:272.8px"><svg class="abs" style="left:7px;top:3.2px" width="13" height="20.400" viewBox="0 0 13 20.400"><rect x="0" y="0" width="13" height="20.400" rx="1.700" fill="#2c414e"/><rect x="1.500" y="2.300" width="10" height="14.300" fill="#8798a2"/><rect x="4.600" y="17.900" width="3.800" height="1.100" rx=".5" fill="#8b9ba5"/><path d="M1.500 16.600v-4.600l2.200-2.400 1.500 1.600 2-2.600 1.600 2.200 2.700-1v6.800z" fill="#2c414e" opacity=".9"/></svg></div><div class="abs dname" style="top:248px">Pokemon</div><div class="abs dname" style="top:281.7px">OPPO-Reno-10x-Zoom</div><div class="abs bar" style="top:243px"><i style="width:2.3px"></i></div><div class="abs val" style="left:560px;width:50.6px;text-align:right;top:243.2px">2.3</div><div class="abs val" style="left:616px;top:243.2px;font-size:6.8px">Kb</div><div class="abs tri" style="left:627.2px;top:243.4px;border-bottom:6px solid #9bd8f5"></div><div class="abs bar" style="top:254.9px"><i style="width:2.3px"></i></div><div class="abs val" style="left:560px;width:50.6px;text-align:right;top:255.1px">2.3</div><div class="abs val" style="left:616px;top:255.1px;font-size:6.8px">Kb</div><div class="abs tri" style="left:627.2px;top:255.70000000000002px;border-top:6px solid #9bd8f5"></div><div class="abs bar" style="top:276.8px"><i style="width:2.3px"></i></div><div class="abs val" style="left:560px;width:50.6px;text-align:right;top:277.0px">432.7</div><div class="abs val" style="left:616px;top:277.0px;font-size:6.8px">Kb</div><div class="abs tri" style="left:627.2px;top:277.2px;border-bottom:6px solid #9bd8f5"></div><div class="abs bar" style="top:289.3px"><i style="width:29.4px"></i></div><div class="abs val" style="left:560px;width:50.6px;text-align:right;top:289.5px">26.5</div><div class="abs val" style="left:616px;top:289.5px;font-size:6.8px">Mb</div><div class="abs tri" style="left:627.2px;top:290.1px;border-top:6px solid #9bd8f5"></div><div class="abs" style="left:275.3px;top:507px;font-size:5.9px;line-height:8px;color:#fff;text-decoration:underline;white-space:nowrap">WAN / LAN 带宽监控 FAQ</div><div class="abs tbtn" style="left:408px;top:503.6px;width:75px;height:17px;line-height:17px;font-size:6.3px;border-radius:4px">应用本页面设置</div></body></html>
